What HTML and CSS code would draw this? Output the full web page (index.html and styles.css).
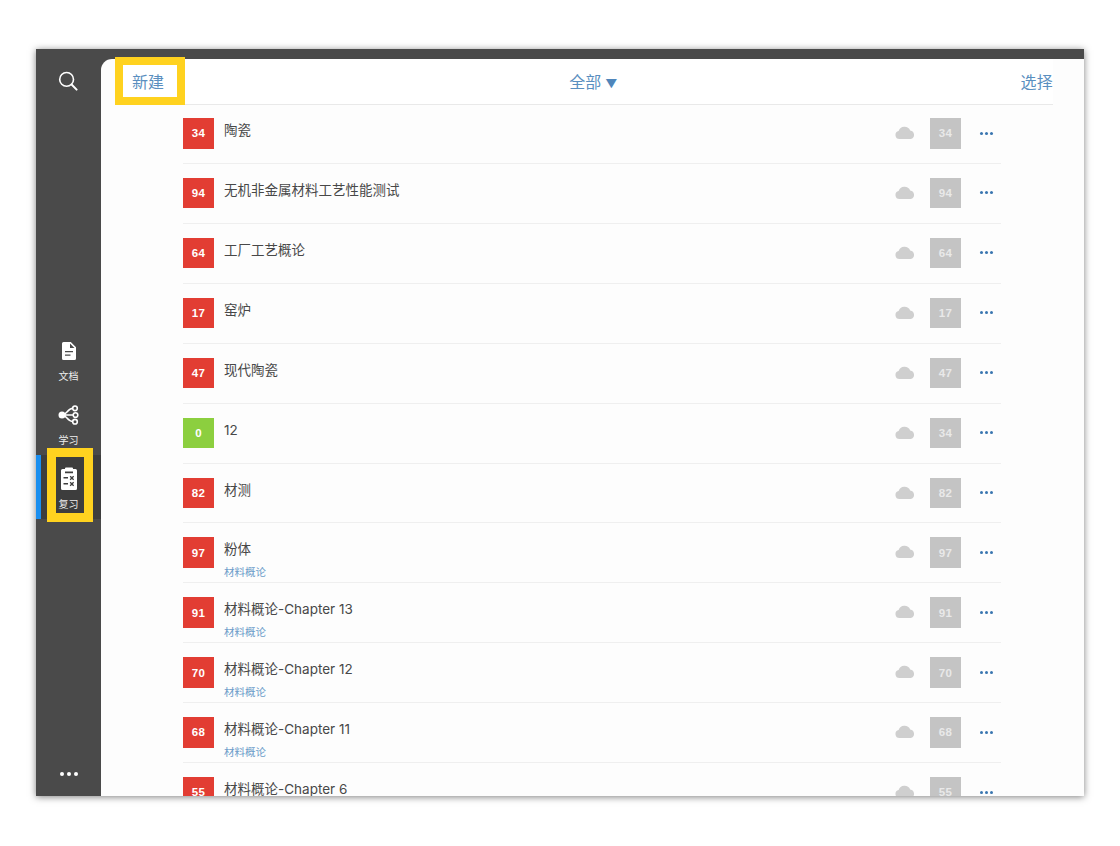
FILE: index.html
```html
<!DOCTYPE html>
<html lang="zh">
<head>
<meta charset="utf-8">
<title>复习</title>
<link rel="stylesheet" href="styles.css">
</head>
<body>
<div class="frame">
  <aside class="sidebar">
    <svg class="search" width="20" height="20" viewBox="0 0 20 20"><circle cx="8.6" cy="8.4" r="6.9" fill="none" stroke="#fff" stroke-width="1.6"/><path d="M13.6 13.5 L18.6 18.6" stroke="#fff" stroke-width="2" stroke-linecap="round"/></svg>
    <nav class="nav">
      <div class="nav-item">
        <svg width="20" height="20" viewBox="0 0 20 20"><path fill="#fff" fill-rule="evenodd" d="M4.5 1h7.3L17 6.2v11.3a1.5 1.5 0 0 1-1.5 1.5h-11A1.5 1.5 0 0 1 3 17.5v-15A1.5 1.5 0 0 1 4.500 1zM11 2.500V7h4.500zM6 10v1.300h8V10zM6 13.500v1.300h5.500v-1.300z"/></svg>
        <span class="nav-label">文档</span>
      </div>
      <div class="nav-item">
        <svg width="22" height="20" viewBox="0 0 22 20"><circle cx="4" cy="10" r="3.500" fill="#fff"/><path d="M4 10 H15.500 M4 10 C9 10 9 3.500 15 3.300 M4 10 C9 10 9 16.500 15 16.700" fill="none" stroke="#fff" stroke-width="1.500"/><g fill="#4a4a4a" stroke="#fff" stroke-width="1.600"><circle cx="17" cy="3.300" r="2.300"/><circle cx="17.500" cy="10" r="2.300"/><circle cx="17" cy="16.700" r="2.300"/></g></svg>
        <span class="nav-label">学习</span>
      </div>
      <div class="nav-item is-active">
        <svg width="20" height="23" viewBox="0 0 20 23"><path fill="#fff" fill-rule="evenodd" d="M7 0.500h6a1 1 0 0 1 1 1V2h2.500A1.500 1.500 0 0 1 18 3.500v18a1.500 1.500 0 0 1-1.500 1.500h-13A1.500 1.500 0 0 1 2 21.500v-18A1.500 1.500 0 0 1 3.500 2H6v-.500a1 1 0 0 1 1-1zM6 4.500V6.300h8V4.500zM4.500 10v1.600h4.500V10zM4.500 16v1.600h4.500V16zM11.600 8.800l-.9.900 1.300 1.300-1.300 1.300.9.900 1.300-1.300 1.300 1.300.9-.9-1.300-1.300 1.300-1.300-.9-.9-1.300 1.300zM11.600 14.800l-.9.900 1.300 1.300-1.300 1.300.9.900 1.300-1.300 1.300 1.300.9-.9-1.300-1.300 1.300-1.300-.9-.9-1.300 1.300z"/></svg>
        <span class="nav-label">复习</span>
      </div>
    </nav>
    <div class="side-more"><i></i><i></i><i></i></div>
  </aside>
  <main class="panel">
    <header class="head">
      <span class="head-new">新建</span>
      <span class="head-filter">全部<span class="caret">▼</span></span>
      <span class="head-select">选择</span>
    </header>
    <section class="list">
      <div class="row"><div class="badge red">34</div><div class="info"><div class="title">陶瓷</div></div><svg class="cloud" viewBox="0 0 20 13"><use href="#cloud"/></svg><div class="badge grey">34</div><div class="more"><i></i><i></i><i></i></div></div>
      <div class="row"><div class="badge red">94</div><div class="info"><div class="title">无机非金属材料工艺性能测试</div></div><svg class="cloud" viewBox="0 0 20 13"><use href="#cloud"/></svg><div class="badge grey">94</div><div class="more"><i></i><i></i><i></i></div></div>
      <div class="row"><div class="badge red">64</div><div class="info"><div class="title">工厂工艺概论</div></div><svg class="cloud" viewBox="0 0 20 13"><use href="#cloud"/></svg><div class="badge grey">64</div><div class="more"><i></i><i></i><i></i></div></div>
      <div class="row"><div class="badge red">17</div><div class="info"><div class="title">窑炉</div></div><svg class="cloud" viewBox="0 0 20 13"><use href="#cloud"/></svg><div class="badge grey">17</div><div class="more"><i></i><i></i><i></i></div></div>
      <div class="row"><div class="badge red">47</div><div class="info"><div class="title">现代陶瓷</div></div><svg class="cloud" viewBox="0 0 20 13"><use href="#cloud"/></svg><div class="badge grey">47</div><div class="more"><i></i><i></i><i></i></div></div>
      <div class="row"><div class="badge green">0</div><div class="info"><div class="title">12</div></div><svg class="cloud" viewBox="0 0 20 13"><use href="#cloud"/></svg><div class="badge grey">34</div><div class="more"><i></i><i></i><i></i></div></div>
      <div class="row"><div class="badge red">82</div><div class="info"><div class="title">材测</div></div><svg class="cloud" viewBox="0 0 20 13"><use href="#cloud"/></svg><div class="badge grey">82</div><div class="more"><i></i><i></i><i></i></div></div>
      <div class="row"><div class="badge red">97</div><div class="info"><div class="title">粉体</div><div class="sub">材料概论</div></div><svg class="cloud" viewBox="0 0 20 13"><use href="#cloud"/></svg><div class="badge grey">97</div><div class="more"><i></i><i></i><i></i></div></div>
      <div class="row"><div class="badge red">91</div><div class="info"><div class="title">材料概论-Chapter 13</div><div class="sub">材料概论</div></div><svg class="cloud" viewBox="0 0 20 13"><use href="#cloud"/></svg><div class="badge grey">91</div><div class="more"><i></i><i></i><i></i></div></div>
      <div class="row"><div class="badge red">70</div><div class="info"><div class="title">材料概论-Chapter 12</div><div class="sub">材料概论</div></div><svg class="cloud" viewBox="0 0 20 13"><use href="#cloud"/></svg><div class="badge grey">70</div><div class="more"><i></i><i></i><i></i></div></div>
      <div class="row"><div class="badge red">68</div><div class="info"><div class="title">材料概论-Chapter 11</div><div class="sub">材料概论</div></div><svg class="cloud" viewBox="0 0 20 13"><use href="#cloud"/></svg><div class="badge grey">68</div><div class="more"><i></i><i></i><i></i></div></div>
      <div class="row"><div class="badge red">55</div><div class="info"><div class="title">材料概论-Chapter 6</div></div><svg class="cloud" viewBox="0 0 20 13"><use href="#cloud"/></svg><div class="badge grey">55</div><div class="more"><i></i><i></i><i></i></div></div>
    </section>
  </main>
  <div class="mark mark-new"></div>
  <div class="mark mark-review"></div>
</div>
<svg class="defs" width="0" height="0"><symbol id="cloud" viewBox="0 0 20 13"><path fill="#cfcfcf" d="M4.500 13A4 4 0 0 1 3.600 5.100 6.200 6.200 0 0 1 15.200 4.400 4.400 4.400 0 0 1 15.800 13z"/></symbol></svg>
</body>
</html>
```
FILE: styles.css
```css
* { box-sizing: border-box; }
html, body { margin: 0; padding: 0; background: #fff; }
body {
  height: 846px;
  padding: 49px 36px 50px;
  overflow: hidden;
  font-family: "Inter", "Noto Sans CJK SC", "Liberation Sans", sans-serif;
}
.frame {
  position: relative;
  display: flex;
  width: 1048px;
  height: 747px;
  background: #4a4a4a;
  box-shadow: 0 1px 7px rgba(0, 0, 0, .5);
}
.defs { position: absolute; }

.sidebar {
  flex: 0 0 65px;
  display: flex;
  flex-direction: column;
  align-items: stretch;
}
.search { display: block; margin: 22px 0 0 22px; }
.nav { margin-top: 236px; display: flex; flex-direction: column; }
.nav-item {
  width: 65px;
  height: 64px;
  padding-top: 14px;
  display: flex;
  flex-direction: column;
  align-items: center;
}
.nav-item svg { height: 20px; display: block; flex: none; }
.nav-label {
  margin-top: 8px;
  font-size: 10px;
  line-height: 14px;
  color: #eee;
}
.nav-item.is-active {
  background: #3d3d3d;
  border-left: 5px solid #1a8ff0;
  padding-top: 12px;
}
.nav-item.is-active svg { height: 23px; margin-left: -5px; }
.nav-item.is-active .nav-label { margin-left: -5px; margin-top: 7px; }
.side-more {
  margin-top: auto;
  margin-bottom: 20px;
  display: flex;
  justify-content: center;
  gap: 3px;
}
.side-more i { width: 4px; height: 4px; border-radius: 50%; background: #fff; }

.panel {
  flex: 1;
  margin-top: 10px;
  background: #fdfdfd;
  border-top-left-radius: 11px;
  overflow: hidden;
  display: flex;
  flex-direction: column;
}
.head {
  flex: none;
  height: 46px;
  margin: 0 31px 0 20px;
  border-bottom: 1px solid #e9e9e9;
  display: flex;
  align-items: center;
  justify-content: space-between;
  padding: 0 0 1px 11px;
  font-size: 16px;
  color: #5a8fc0;
  background: #fff;
}
.head-filter { margin-left: 2px; }
.caret { font-size: 12px; margin-left: 4px; color: #4f86bb; }
.head-select { letter-spacing: .3px; }

.list { margin: -1px 0 0 82px; width: 818px; flex: 1; overflow: hidden; }
.row {
  height: 59.93px;
  padding-top: 14px;
  border-bottom: 1px solid #efefef;
  display: flex;
  align-items: flex-start;
}
.badge {
  flex: none;
  width: 31px;
  height: 30.5px;
  display: flex;
  align-items: center;
  justify-content: center;
  font-family: "Liberation Sans", "Noto Sans CJK SC", sans-serif;
  font-size: 11.500px;
  font-weight: 700;
  letter-spacing: .3px;
  color: #fff;
}
.red { background: #e23d33; }
.green { background: #8ccf3f; }
.grey { background: #c4c4c4; color: #e9e9e9; }
.info { flex: 1; margin-left: 10px; padding-top: 2px; min-width: 0; }
.title { font-size: 13.500px; line-height: 20px; color: #484848; }
.sub { margin-top: 7px; font-size: 10.500px; line-height: 14px; color: #6a9bc9; }
.cloud { flex: none; width: 20px; height: 13px; margin: 8px 15px 0 0; }
.more { flex: none; width: 40px; height: 30px; padding: 0 7px 0 19px; display: flex; align-items: center; gap: 2px; }
.more i { width: 3px; height: 3px; border-radius: 50%; background: #3a76b0; flex: none; }

.mark { position: absolute; border-style: solid; border-color: #ffd21f; }
.mark-new { left: 79px; top: 8px; width: 70px; height: 48px; border-width: 8px; }
.mark-review { left: 11px; top: 399px; width: 46px; height: 74px; border-width: 9px; }
```
